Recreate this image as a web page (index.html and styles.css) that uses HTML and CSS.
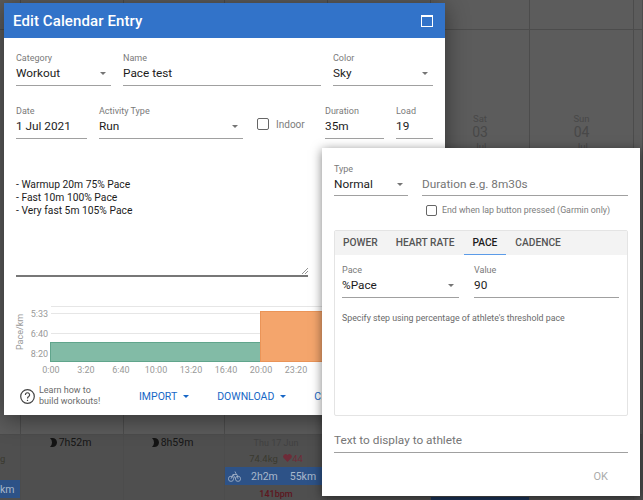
FILE: index.html
```html
<!DOCTYPE html>
<html lang="en">
<head>
    <meta charset="UTF-8">
    <meta name="viewport" content="width=device-width, initial-scale=1.0">
    <title>Edit Calendar Entry</title>
    <link rel="stylesheet" href="styles.css">
</head>
<body>
    <!-- Calendar behind the dialogs -->
    <div class="calendar">
        <div class="cal-row cal-row-top">
            <div class="cell"></div><div class="cell"></div><div class="cell"></div><div class="cell"></div>
            <div class="cell"></div><div class="cell"></div><div class="cell"></div><div class="cell"></div>
        </div>
        <div class="cal-row cal-row-mid">
            <div class="cell"></div><div class="cell"></div><div class="cell"></div><div class="cell"></div>
            <div class="cell"></div>
            <div class="cell day-head"><span>Sat</span><b>03</b><span>Jul</span></div>
            <div class="cell day-head"><span>Sun</span><b>04</b><span>Jul</span></div>
            <div class="cell"></div>
        </div>
        <div class="cal-row cal-row-bottom">
            <div class="cell">
                <div class="weight weight-cut">g</div>
                <div class="ride ride-cut">km</div>
            </div>
            <div class="cell"><div class="sleep"><svg width="7" height="9" viewBox="0 0 7 9"><path d="M0 0h2.500a4.500 4.500 0 0 1 0 9H0a6 6 0 0 0 0-9z" fill="#141414"/></svg>7h52m</div></div>
            <div class="cell"><div class="sleep"><svg width="7" height="9" viewBox="0 0 7 9"><path d="M0 0h2.500a4.500 4.500 0 0 1 0 9H0a6 6 0 0 0 0-9z" fill="#141414"/></svg>8h59m</div></div>
            <div class="cell">
                <div class="thu">Thu 17 Jun</div>
                <div class="weight">74.4kg <span class="hr"><svg width="9" height="8" viewBox="0 0 9 8"><path d="M4.500 8 .7 4.100A2.300 2.300 0 0 1 4.500 1.200 2.300 2.300 0 0 1 8.300 4.100z" fill="#6e2b38"/></svg>44</span></div>
                <div class="ride">
                    <svg width="13" height="12" viewBox="0 0 13 12" fill="none" stroke="#a9b8cb" stroke-width=".8"><circle cx="3" cy="8.800" r="2.600"/><circle cx="10" cy="8.800" r="2.600"/><path d="M3 8.800 5 4.500h4l1 4.300M5 4.500l2.600 4.300M7 1.500l1.400 3"/></svg>
                    <span class="ride-time">2h2m</span><span>55km</span>
                </div>
                <div class="bpm">141bpm</div>
            </div>
            <div class="cell"></div>
            <div class="cell"><div class="ride ride-low"></div></div>
            <div class="cell"></div>
            <div class="cell"></div>
        </div>
    </div>

    <!-- Edit dialog -->
    <div class="dialog entry-dialog">
        <div class="dialog-title">
            <h1>Edit Calendar Entry</h1>
            <span class="maximize"></span>
        </div>
        <div class="entry-body">
            <div class="form-row">
                <div class="field w-95"><label>Category</label><div class="value select">Workout</div></div>
                <div class="field w-198"><label>Name</label><div class="value">Pace test</div></div>
                <div class="field w-100"><label>Color</label><div class="value select">Sky</div></div>
            </div>
            <div class="form-row row-two">
                <div class="field w-71"><label>Date</label><div class="value">1 Jul 2021</div></div>
                <div class="field w-144"><label>Activity Type</label><div class="value select">Run</div></div>
                <div class="check indoor"><span class="box"></span>Indoor</div>
                <div class="field w-59"><label>Duration</label><div class="value">35m</div></div>
                <div class="field w-37"><label>Load</label><div class="value">19</div></div>
            </div>
            <div class="notes">
                <div>- Warmup 20m 75% Pace</div>
                <div>- Fast 10m 100% Pace</div>
                <div>- Very fast 5m 105% Pace</div>
                <svg class="grip" width="6" height="6" viewBox="0 0 6 6" stroke="#777" stroke-width=".8"><path d="M0 6 6 0M3 6l3-3"/></svg>
            </div>
            <svg class="chart" width="441" height="72" viewBox="0 0 441 72">
                <path stroke="#e6e6e6" d="M47 .5H441M47 7.500H441M47 27.500H441M47 47.500H441"/>
                <rect x="46.500" y="36.500" width="210" height="19" fill="#82bba6" stroke="#60a58c"/>
                <rect x="256.500" y="5.500" width="180" height="50" fill="#f4a56c" stroke="#ea9458"/>
                <g class="axis" text-anchor="end">
                    <text x="44" y="11">5:33</text>
                    <text x="44" y="31">6:40</text>
                    <text x="44" y="51">8:20</text>
                </g>
                <text class="axis" transform="translate(19 26) rotate(-90)" text-anchor="middle">Pace/km</text>
                <g class="axis" text-anchor="middle">
                    <text x="47" y="67">0:00</text>
                    <text x="82" y="67">3:20</text>
                    <text x="117" y="67">6:40</text>
                    <text x="152" y="67">10:00</text>
                    <text x="187" y="67">13:20</text>
                    <text x="222" y="67">16:40</text>
                    <text x="257" y="67">20:00</text>
                    <text x="292" y="67">23:20</text>
                </g>
            </svg>
            <div class="actions">
                <svg class="help" width="15" height="15" viewBox="0 0 15 15" fill="none" stroke="#444" stroke-width="1.200"><circle cx="7.500" cy="7.500" r="6.800"/><path d="M5.400 5.900a2.100 2.100 0 1 1 3.300 1.700c-.8.500-1.200 1-1.200 1.900"/><path d="M7.500 10.800v1.200"/></svg>
                <div class="learn">Learn how to<br>build workouts!</div>
                <button class="link-btn">IMPORT<i></i></button>
                <button class="link-btn">DOWNLOAD<i></i></button>
                <button class="link-btn">CLOSE</button>
            </div>
        </div>
    </div>

    <!-- Step dialog -->
    <div class="dialog step-dialog">
        <div class="form-row">
            <div class="field w-74"><label>Type</label><div class="value select">Normal</div></div>
            <div class="field w-206"><label>&nbsp;</label><div class="value hint">Duration e.g. 8m30s</div></div>
        </div>
        <div class="check lap"><span class="box box-small"></span>End when lap button pressed (Garmin only)</div>
        <div class="panel">
            <div class="tabs">
                <span class="tab">POWER</span>
                <span class="tab">HEART RATE</span>
                <span class="tab active">PACE</span>
                <span class="tab">CADENCE</span>
            </div>
            <div class="panel-body">
                <div class="form-row">
                    <div class="field w-117"><label>Pace</label><div class="value select">%Pace</div></div>
                    <div class="field w-145"><label>Value</label><div class="value">90</div></div>
                </div>
                <p class="help-text">Specify step using percentage of athlete's threshold pace</p>
            </div>
        </div>
        <div class="field athlete-text"><div class="value hint">Text to display to athlete</div></div>
        <div class="ok">OK</div>
    </div>
</body>
</html>
```

FILE: styles.css
```css
/* General Styling */
* {
    box-sizing: border-box;
}

html, body {
    margin: 0;
    padding: 0;
    height: 500px;
    overflow: hidden;
}

body {
    position: relative;
    width: 643px;
    font-family: Roboto, "Liberation Sans", sans-serif;
    background-color: #5c5c5c;
    color: #1c1c1c;
}

/* Calendar behind the scrim */
.cal-row {
    display: grid;
    grid-template-columns: 21px 103px 101px 103px 103px 99px 104px 9px;
    border-bottom: 1px solid #4c4c4c;
}

.cal-row-top {
    height: 30px;
}

.cal-row-mid {
    height: 405px;
}

.cal-row-bottom {
    height: 65px;
    background-color: #4f4f4f;
    border-bottom: none;
}

.cell {
    border-right: 1px solid #4c4c4c;
    min-width: 0;
    overflow: hidden;
    text-align: center;
}

.day-head {
    display: flex;
    flex-direction: column;
    align-items: center;
    padding-top: 82px;
    color: #484848;
    font-size: 9.500px;
    line-height: 13px;
}

.day-head b {
    font-size: 14px;
    font-weight: 400;
    line-height: 15px;
}

.sleep {
    display: flex;
    justify-content: center;
    align-items: center;
    gap: 2px;
    height: 14px;
    padding-right: 3px;
    font-size: 10.500px;
    color: #161616;
}

.thu {
    margin-top: 2px;
    font-size: 9px;
    line-height: 13px;
    color: #424242;
}

.weight {
    margin-top: 2px;
    font-size: 9.500px;
    line-height: 13px;
    color: #3a3a30;
}

.weight-cut {
    margin-top: 17px;
    text-align: left;
}

.hr {
    margin-left: 3px;
    color: #6e2b38;
}

.ride {
    display: flex;
    align-items: center;
    height: 18px;
    margin-top: 2px;
    padding-left: 3px;
    background-color: #2d5287;
    color: #a9b8cb;
    font-size: 10.500px;
}

.ride-time {
    margin: 0 12px 0 10px;
}

.ride-cut {
    margin-top: 15px;
    padding-left: 0;
}

.ride-low {
    margin-top: 62px;
    background-color: #1c3357;
}

.bpm {
    margin-top: 4px;
    font-size: 9px;
    font-weight: 500;
    line-height: 10px;
    color: #5e1620;
}

/* Dialogs */
.dialog {
    position: absolute;
    background-color: #fff;
    box-shadow: 0 4px 22px rgba(0, 0, 0, 0.45);
}

.entry-dialog {
    left: 4px;
    top: 3px;
    width: 441px;
    height: 412px;
    overflow: hidden;
}

.dialog-title {
    display: flex;
    align-items: center;
    justify-content: space-between;
    height: 35px;
    padding: 0 12px 0 9px;
    background-color: #3273c9;
    color: #fff;
}

.dialog-title h1 {
    margin: 0;
    font-size: 15px;
    font-weight: 500;
    letter-spacing: 0.1px;
}

.maximize {
    width: 12px;
    height: 12px;
    border: 1.500px solid #fff;
    border-top-width: 2px;
}

.entry-body {
    padding: 14px 0 0 12px;
}

.form-row {
    display: flex;
    gap: 12px;
}

.row-two {
    margin-top: 19px;
}

.field {
    flex: none;
    height: 34px;
    border-bottom: 1px solid #a0a0a0;
}

.field label {
    display: block;
    margin-bottom: 1px;
    font-size: 9px;
    line-height: 12px;
    color: #7a7a7a;
}

.value {
    position: relative;
    font-size: 11.800px;
    line-height: 17px;
    color: #1c1c1c;
}

.select::after {
    content: "";
    position: absolute;
    right: 5px;
    top: 7px;
    border: 3.500px solid transparent;
    border-top-color: #757575;
    border-bottom: none;
}

.hint {
    color: #767676;
}

.w-37 { width: 37px; }
.w-59 { width: 59px; }
.w-71 { width: 71px; }
.w-74 { width: 74px; }
.w-95 { width: 95px; }
.w-100 { width: 100px; }
.w-117 { width: 117px; }
.w-144 { width: 144px; }
.w-145 { width: 145px; }
.w-198 { width: 198px; }
.w-206 { width: 206px; }

.check {
    display: flex;
    align-items: center;
    color: #7d7d7d;
}

.box {
    flex: none;
    width: 12px;
    height: 12px;
    border: 1.500px solid #666;
    border-radius: 2px;
}

.indoor {
    width: 56px;
    height: 34px;
    margin-left: 2px;
    padding-top: 4px;
    gap: 7px;
    font-size: 10px;
}

.notes {
    position: relative;
    width: 292px;
    height: 138px;
    padding-top: 39px;
    border-bottom: 2px solid #777;
    font-size: 10.300px;
    line-height: 13.200px;
}

.grip {
    position: absolute;
    right: 0;
    bottom: 1px;
}

.chart {
    display: block;
    margin: 29px 0 0 -12px;
}

.axis text, text.axis {
    font-family: Roboto, "Liberation Sans", sans-serif;
    font-size: 9px;
    fill: #999;
}

.actions {
    display: flex;
    align-items: center;
    height: 30px;
    margin-top: 3px;
    white-space: nowrap;
}

.help {
    flex: none;
    margin-left: 4px;
}

.learn {
    width: 100px;
    margin-left: 4px;
    font-size: 9px;
    line-height: 11px;
    color: #6a6a6a;
}

.link-btn {
    flex: none;
    margin-right: 28px;
    padding: 0;
    border: none;
    background: none;
    font-family: inherit;
    font-size: 10.500px;
    color: #1767c6;
}

.link-btn i {
    display: inline-block;
    margin-left: 6px;
    vertical-align: 2px;
    border: 3.500px solid transparent;
    border-top-color: #1767c6;
    border-bottom: none;
}

/* Step dialog */
.step-dialog {
    left: 322px;
    top: 148px;
    width: 318px;
    height: 348px;
    padding: 15px 12px 0;
    box-shadow: 0 2px 10px rgba(0, 0, 0, 0.5);
}

.step-dialog .form-row {
    gap: 14px;
}

.step-dialog .field {
    height: 33px;
}

.lap {
    height: 14px;
    margin: 7px 0 0 92px;
    gap: 5px;
    font-size: 8.800px;
    white-space: nowrap;
}

.box-small {
    width: 11px;
    height: 11px;
}

.panel {
    height: 186px;
    margin-top: 13px;
    border: 1px solid #e4e4e4;
    border-radius: 2px;
}

.tabs {
    display: flex;
    height: 24px;
    background-color: #f3f3f3;
}

.tab {
    padding: 0 9px;
    font-size: 10.200px;
    font-weight: 500;
    line-height: 24px;
    color: #555;
}

.tab:first-child {
    padding-left: 8px;
}

.active {
    color: #1c1c1c;
    border-bottom: 1px solid #5b9be8;
}

.panel-body {
    padding: 9px 7px 0;
}

.panel-body .form-row {
    gap: 15px;
}

.step-dialog .panel-body .field {
    height: 34px;
}

.help-text {
    margin: 14px 0 0;
    font-size: 8.800px;
    line-height: 12px;
    color: #6a6a6a;
}

.step-dialog .athlete-text {
    height: 22px;
    margin-top: 15px;
    padding-top: 1px;
}

.ok {
    margin: 17px 20px 0 0;
    text-align: right;
    font-size: 11px;
    line-height: 13px;
    color: #ababab;
}
```
